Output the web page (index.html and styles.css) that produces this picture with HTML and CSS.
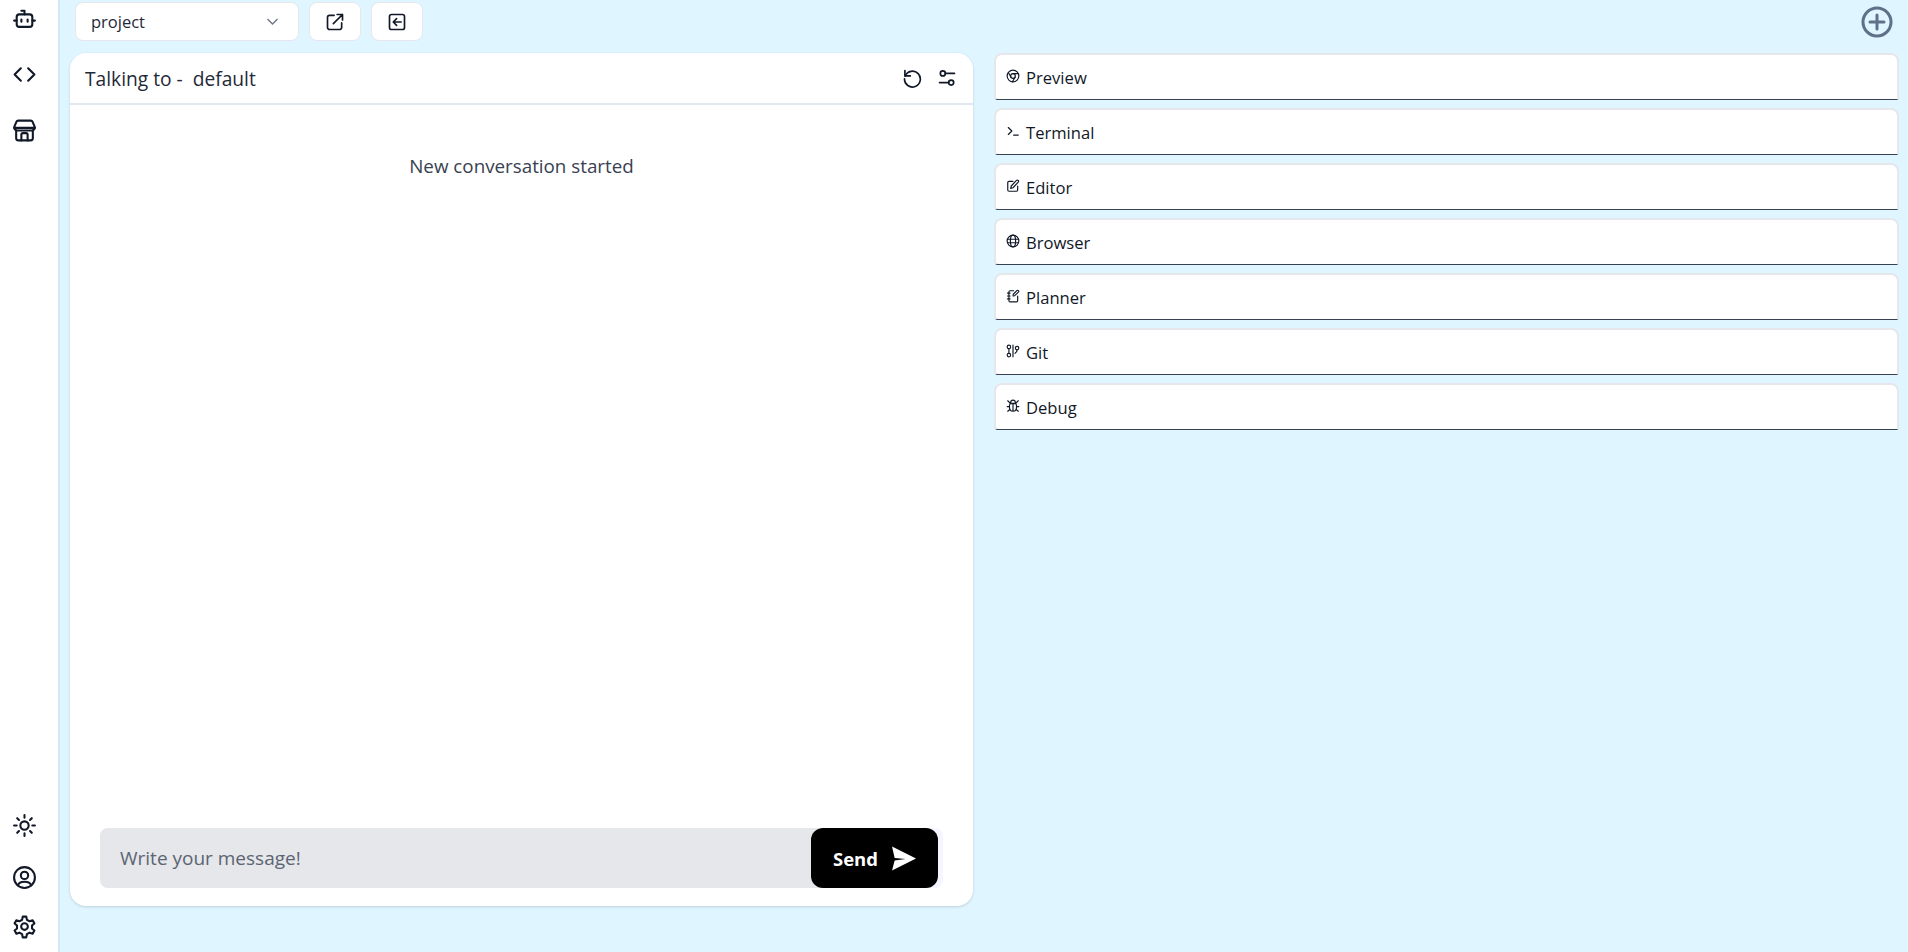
FILE: index.html
```html
<!DOCTYPE html>
<html lang="en">

<head>
    <meta charset="UTF-8" />
    <title>Agent workspace</title>
    <link rel="stylesheet" href="styles.css">
</head>

<body>
    <div class="app">
        <nav class="sidebar">
            <div class="nav-group">
                <svg class="nav-icon" viewBox="0 0 24 24"><path d="M12 8V4.500H9" /><rect x="4.500" y="8" width="15" height="12" rx="2.500" /><path d="M2 14h2.500M19.500 14H22M9 13v2M15 13v2" /></svg>
                <svg class="nav-icon" viewBox="0 0 24 24"><path d="M8.500 6 2.500 12l6 6M15.500 6l6 6-6 6" /></svg>
                <svg class="nav-icon" viewBox="0 0 24 24"><path d="M6 2.500h12a2 2 0 0 1 1.800 1.200L22 9a3 3 0 0 1-3 3H5a3 3 0 0 1-3-3l2.200-5.300A2 2 0 0 1 6 2.500z" /><path d="M2.500 9.500h19M4 12v7.500a2 2 0 0 0 2 2h12a2 2 0 0 0 2-2V12" /><path d="M9 21.500V16a1.500 1.500 0 0 1 1.500-1.500h3A1.500 1.500 0 0 1 15 16v5.500" /></svg>
            </div>
            <div class="nav-group nav-bottom">
                <svg class="nav-icon" viewBox="0 0 24 24"><circle cx="12" cy="12" r="4" /><path d="M12 2v2.500M12 19.500V22M2 12h2.500M19.500 12H22M5 5l1.700 1.700M17.300 17.300 19 19M5 19l1.700-1.700M17.300 6.700 19 5" /></svg>
                <svg class="nav-icon" viewBox="0 0 24 24"><circle cx="12" cy="12" r="10" /><circle cx="12" cy="10" r="3.500" /><path d="M5.500 19.500c.8-2.300 2.800-3.500 6.500-3.500s5.700 1.200 6.500 3.500" /></svg>
                <svg class="nav-icon gear" viewBox="0 0 24 24"><path d="M10.300 2.500h3.400l.6 3 2.600 1.500 2.900-1 1.700 3-2.300 2v2.900l2.300 2-1.700 3-2.900-1-2.600 1.500-.6 3h-3.400l-.6-3-2.600-1.500-2.900 1-1.700-3 2.300-2V11l-2.300-2 1.700-3 2.900 1 2.600-1.500z" /><circle cx="12" cy="12" r="3.200" /></svg>
            </div>
        </nav>

        <div class="main">
            <div class="toolbar">
                <div class="project-select">
                    <span>project</span>
                    <svg class="chevron" viewBox="0 0 24 24"><path d="m4 8 8 8 8-8" /></svg>
                </div>
                <button class="tool-btn">
                    <svg viewBox="0 0 24 24"><path d="M11 4H5.500A2.500 2.500 0 0 0 3 6.500v12A2.500 2.500 0 0 0 5.500 21h12a2.500 2.500 0 0 0 2.500-2.500V13" /><path d="M10 14 21 3M14.500 3H21v6.500" /></svg>
                </button>
                <button class="tool-btn">
                    <svg viewBox="0 0 24 24"><rect x="3" y="3" width="18" height="18" rx="2.500" /><path d="M17 12H8M11.500 8 7.500 12l4 4" /></svg>
                </button>
                <svg class="add-btn" viewBox="0 0 32 32"><circle cx="16" cy="16" r="14" /><path d="M16 9v14M9 16h14" /></svg>
            </div>

            <div class="content">
                <section class="chat">
                    <header class="chat-head">
                        <span>Talking to -&nbsp; default</span>
                        <div class="chat-actions">
                            <svg viewBox="0 0 24 24"><path d="M3.500 3v6.500H10" /><path d="M3.800 9.500A9.500 9.500 0 1 1 3 13" /></svg>
                            <svg viewBox="0 0 24 24"><circle cx="7" cy="6.500" r="3" /><circle cx="17" cy="17.500" r="3" /><path d="M10 6.500h11M3 17.500h11" /></svg>
                        </div>
                    </header>
                    <div class="chat-body">
                        <p class="notice">New conversation started</p>
                    </div>
                    <div class="composer">
                        <input type="text" placeholder="Write your message!" />
                        <button class="send">
                            Send
                            <svg viewBox="0 0 24 24"><path d="M1 .5 24 12 1 23.500 3.500 14 14 12.500 3.500 11.500z" /></svg>
                        </button>
                    </div>
                </section>

                <section class="panels">
                    <div class="panel">
                        <svg viewBox="0 0 24 24"><circle cx="12" cy="12" r="10" /><circle cx="12" cy="12" r="4" /><path d="M12 8h9M8.500 14 4 6M15.500 14 11 22" /></svg>
                        Preview
                    </div>
                    <div class="panel">
                        <svg viewBox="0 0 24 24"><path d="m4 6 6 6-6 6M13 19h8" /></svg>
                        Terminal
                    </div>
                    <div class="panel">
                        <svg viewBox="0 0 24 24"><path d="M12 4H5a2 2 0 0 0-2 2v13a2 2 0 0 0 2 2h13a2 2 0 0 0 2-2v-7" /><path d="M18 2.500a2.100 2.100 0 0 1 3 3L12 15l-4 1 1-4z" /></svg>
                        Editor
                    </div>
                    <div class="panel">
                        <svg viewBox="0 0 24 24"><circle cx="12" cy="12" r="10" /><ellipse cx="12" cy="12" rx="4.500" ry="10" /><path d="M2.500 9h19M2.500 15h19" /></svg>
                        Browser
                    </div>
                    <div class="panel">
                        <svg viewBox="0 0 24 24"><path d="M13 3H7a2 2 0 0 0-2 2v15a2 2 0 0 0 2 2h11a2 2 0 0 0 2-2v-8" /><path d="M19 2.500a1.800 1.800 0 0 1 2.500 2.500L15 11.500l-3 .5.500-3zM2.500 7H7M2.500 12H7M2.500 17H7" /></svg>
                        Planner
                    </div>
                    <div class="panel">
                        <svg viewBox="0 0 24 24"><circle cx="5" cy="5" r="3" /><circle cx="5" cy="19" r="3" /><circle cx="19" cy="7" r="3" /><path d="M5 8v8M12 2v20M19 10c0 3-2 5-3.500 6" /></svg>
                        Git
                    </div>
                    <div class="panel">
                        <svg viewBox="0 0 24 24"><path d="M8 7.500V6a4 4 0 0 1 8 0v1.500zM7 8h10l1 3v4a6 6 0 0 1-12 0v-4zM12 8v13M3 3l4 4M21 3l-4 4M2 13h4M18 13h4M3 21l4-3.500M21 21l-4-3.500" /></svg>
                        Debug
                    </div>
                </section>
            </div>
        </div>
    </div>
</body>

</html>
```

FILE: styles.css
```css
* {
    box-sizing: border-box;
}

body {
    margin: 0;
    height: 952px;
    overflow: hidden;
    font-family: 'Open Sans', 'Noto Sans', sans-serif;
    background: #dff5ff;
    color: #1f2937;
}

.app {
    display: flex;
    height: 100%;
}

.sidebar {
    width: 60px;
    flex-shrink: 0;
    display: flex;
    flex-direction: column;
    justify-content: space-between;
    background: #fff;
    border-right: 2px solid #cfe9f8;
    padding: 6px 9px 0 0;
}

.nav-group {
    display: flex;
    flex-direction: column;
    align-items: center;
    gap: 31px;
}

.nav-bottom {
    gap: 27px;
    padding-bottom: 13px;
}

.gear {
    margin-top: -3px;
}

.nav-icon {
    width: 25px;
    height: 25px;
    fill: none;
    stroke: #111827;
    stroke-width: 2;
    stroke-linecap: round;
    stroke-linejoin: round;
}

.main {
    flex: 1;
    padding: 2px 9px 0 10px;
}

.toolbar {
    display: flex;
    align-items: center;
    gap: 10px;
    height: 39px;
    padding-left: 5px;
}

.project-select {
    width: 224px;
    height: 39px;
    display: flex;
    align-items: center;
    justify-content: space-between;
    padding: 0 18px 0 15px;
    background: #fff;
    border: 1px solid #e5e7eb;
    border-radius: 8px;
    font-size: 16.500px;
}

.chevron {
    width: 15px;
    height: 15px;
    fill: none;
    stroke: #6b7280;
    stroke-width: 2;
}

.tool-btn {
    width: 52px;
    height: 39px;
    display: flex;
    align-items: center;
    justify-content: center;
    padding: 0;
    background: #fff;
    border: 1px solid #e5e7eb;
    border-radius: 8px;
}

.tool-btn svg {
    width: 20px;
    height: 20px;
    fill: none;
    stroke: #111827;
    stroke-width: 2;
    stroke-linecap: round;
    stroke-linejoin: round;
}

.add-btn {
    width: 32px;
    height: 32px;
    margin-left: auto;
    margin-right: 6px;
    fill: none;
    stroke: #5f7189;
    stroke-width: 3;
    stroke-linecap: round;
}

.content {
    display: grid;
    grid-template-columns: 903px 1fr;
    gap: 21px;
    margin-top: 12px;
}

.chat {
    height: 853px;
    display: flex;
    flex-direction: column;
    background: #fff;
    border-radius: 16px;
    box-shadow: 0 1px 3px rgba(0, 0, 0, 0.15);
}

.chat-head {
    height: 52px;
    display: flex;
    align-items: center;
    justify-content: space-between;
    padding: 0 16px 0 15px;
    border-bottom: 2px solid #e2e8f0;
    font-size: 19.200px;
}

.chat-actions {
    display: flex;
    gap: 15px;
}

.chat-actions svg {
    width: 20px;
    height: 20px;
    fill: none;
    stroke: #111827;
    stroke-width: 2;
    stroke-linecap: round;
    stroke-linejoin: round;
}

.chat-body {
    flex: 1;
}

.notice {
    margin: 48px 0 0 0;
    text-align: center;
    font-size: 18.800px;
    color: #374151;
}

.composer {
    display: flex;
    height: 60px;
    margin: 0 30px 18px 30px;
    background: #f5f5ff;
    border-radius: 8px;
    padding-right: 5px;
}

.composer input {
    flex: 1;
    min-width: 0;
    padding: 0 20px;
    border: none;
    outline: none;
    background: #e5e7eb;
    border-radius: 8px 0 0 8px;
    font: inherit;
    font-size: 19px;
}

.composer input::placeholder {
    color: #5b6472;
}

.send {
    width: 127px;
    margin-left: -8px;
    position: relative;
    display: flex;
    align-items: center;
    justify-content: center;
    gap: 13px;
    border: none;
    border-radius: 12px;
    background: #000;
    color: #fff;
    font: inherit;
    font-size: 18.500px;
    font-weight: 700;
}

.send svg {
    width: 25px;
    height: 25px;
    fill: #fff;
}

.panels {
    display: flex;
    flex-direction: column;
    gap: 8px;
}

.panel {
    height: 47px;
    display: flex;
    align-items: center;
    gap: 6px;
    padding: 0 10px;
    background: #fff;
    border: 2px solid #e5e7eb;
    border-bottom: 1px solid #374151;
    border-radius: 8px 8px 0 4px;
    font-size: 16.600px;
    font-weight: 500;
    color: #111827;
}

.panel svg {
    width: 14px;
    height: 14px;
    margin-top: -2px;
    fill: none;
    stroke: #111827;
    stroke-width: 2;
    stroke-linecap: round;
    stroke-linejoin: round;
}
```
